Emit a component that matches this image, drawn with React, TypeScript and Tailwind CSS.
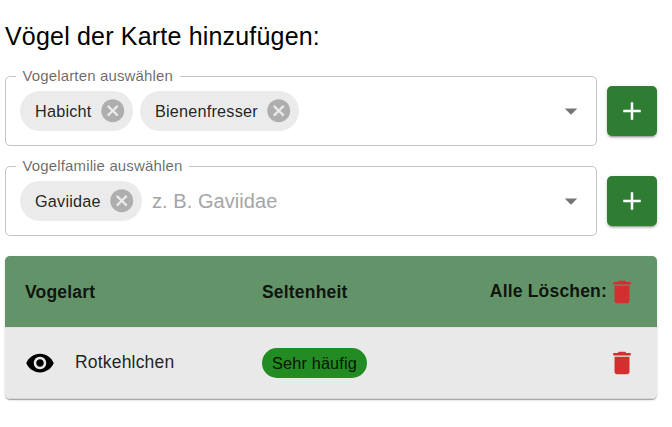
import type { ReactNode } from 'react';

function Icon({ d, className }: { d: string; className: string }) {
  return (
    <svg viewBox="0 0 24 24" fill="currentColor" className={`shrink-0 ${className}`} aria-hidden="true">
      <path d={d} />
    </svg>
  );
}

const PATHS = {
  cancel:
    'M12 2C6.47 2 2 6.47 2 12s4.47 10 10 10 10-4.47 10-10S17.53 2 12 2zm5 13.59L15.59 17 12 13.41 8.41 17 7 15.59 10.59 12 7 8.41 8.41 7 12 10.59 15.59 7 17 8.41 13.41 12 17 15.59z',
  add: 'M19 13h-6v6h-2v-6H5v-2h6V5h2v6h6v2z',
  arrow: 'M7 10l5 5 5-5z',
  trash: 'M6 19c0 1.1.9 2 2 2h8c1.1 0 2-.9 2-2V7H6v12zM19 4h-3.5l-1-1h-5l-1 1H5v2h14V4z',
  eye: 'M12 4.5C7 4.5 2.73 7.61 1 12c1.73 4.39 6 7.5 11 7.5s9.27-3.11 11-7.5c-1.73-4.39-6-7.5-11-7.5zM12 17c-2.76 0-5-2.24-5-5s2.24-5 5-5 5 2.24 5 5-2.24 5-5 5zm0-8c-1.66 0-3 1.34-3 3s1.34 3 3 3 3-1.34 3-3-1.34-3-3-3z',
};

function Chip({ label, width }: { label: string; width: string }) {
  return (
    <span
      className={`flex h-10 items-center justify-between rounded-full bg-[#ebebeb] pr-[6.5px] pl-[15px] text-[16.25px] tracking-[0.2px] text-black/87 ${width}`}
    >
      {label}
      <button type="button" aria-label={`${label} entfernen`} className="text-[#aeaeae]">
        <Icon d={PATHS.cancel} className="size-[27.5px]" />
      </button>
    </span>
  );
}

function Picker({ label, legendWidth, children }: { label: string; legendWidth: string; children: ReactNode }) {
  return (
    <div className="flex h-20 gap-2.5">
      <fieldset className="h-20 w-[592px] rounded-[5px] border border-[#c4c4c4] pl-2.5">
        <legend
          className={`h-5 pl-[6.5px] text-[15px] leading-5 tracking-[0.00938em] whitespace-nowrap text-black/60 ${legendWidth}`}
        >
          {label}
        </legend>
        <div className="mt-[5px] flex h-10 items-center pr-[10px] pl-1">
          {children}
          <Icon d={PATHS.arrow} className="ml-auto size-[30px] text-[#757575]" />
        </div>
      </fieldset>
      <button
        type="button"
        aria-label="Hinzufügen"
        className="mt-5 flex size-[50px] items-center justify-center rounded-[5px] bg-[#2e7d32] text-white shadow-[0_3px_1px_-2px_rgba(0,0,0,0.2),0_2px_2px_0_rgba(0,0,0,0.14),0_1px_5px_0_rgba(0,0,0,0.12)]"
      >
        <Icon d={PATHS.add} className="size-[30px]" />
      </button>
    </div>
  );
}

export default function App() {
  return (
    <main className="h-[427px] w-[672px] overflow-hidden bg-white pt-4 pl-[5px] font-['Liberation_Sans',Arial,sans-serif]">
      <h1 className="h-[50px] text-[25px] leading-10 tracking-[0.0075em] text-black">Vögel der Karte hinzufügen:</h1>
      <div className="flex flex-col gap-2.5">
        <Picker label="Vogelarten auswählen" legendWidth="w-[164px]">
          <div className="flex gap-[7px]">
            <Chip label="Habicht" width="w-[113px]" />
            <Chip label="Bienenfresser" width="w-[159px]" />
          </div>
        </Picker>
        <Picker label="Vogelfamilie auswählen" legendWidth="w-[173px]">
          <Chip label="Gaviidae" width="w-[122px]" />
          <span className="ml-2.5 text-xl tracking-[0.06px] text-[#a5a5a5]">z. B. Gaviidae</span>
        </Picker>
      </div>
      <section className="mt-5 w-[652px] overflow-hidden rounded-[5px] bg-[#e9e9e9] text-[17.5px] leading-[25px] tracking-[0.01071em] text-black/87 shadow-[0_2px_1px_-1px_rgba(0,0,0,0.2),0_1px_1px_0_rgba(0,0,0,0.14),0_1px_3px_0_rgba(0,0,0,0.12)]">
        <div className="grid h-[72px] grid-cols-[237px_1fr_auto] items-center border-b border-[#e0e0e0] bg-[#639368] pr-5 pl-5 font-bold">
          <span className="pt-0.5">Vogelart</span>
          <span className="pt-0.5">Seltenheit</span>
          <span className="flex items-center">
            Alle Löschen:
            <Icon d={PATHS.trash} className="size-[30px] text-[#d32f2f]" />
          </span>
        </div>
        <div className="grid h-[71px] grid-cols-[237px_1fr_auto] items-center border-b border-[#d8d8d8] pr-5 pl-5">
          <span className="flex items-center gap-5">
            <Icon d={PATHS.eye} className="size-[30px] text-black" />
            <span className="pb-px">Rotkehlchen</span>
          </span>
          <span className="flex h-[30px] w-[105px] items-center justify-center rounded-full bg-[#228b22] text-[16.25px] tracking-[0.01071em]">
            Sehr häufig
          </span>
          <Icon d={PATHS.trash} className="size-[30px] text-[#d32f2f]" />
        </div>
      </section>
    </main>
  );
}
